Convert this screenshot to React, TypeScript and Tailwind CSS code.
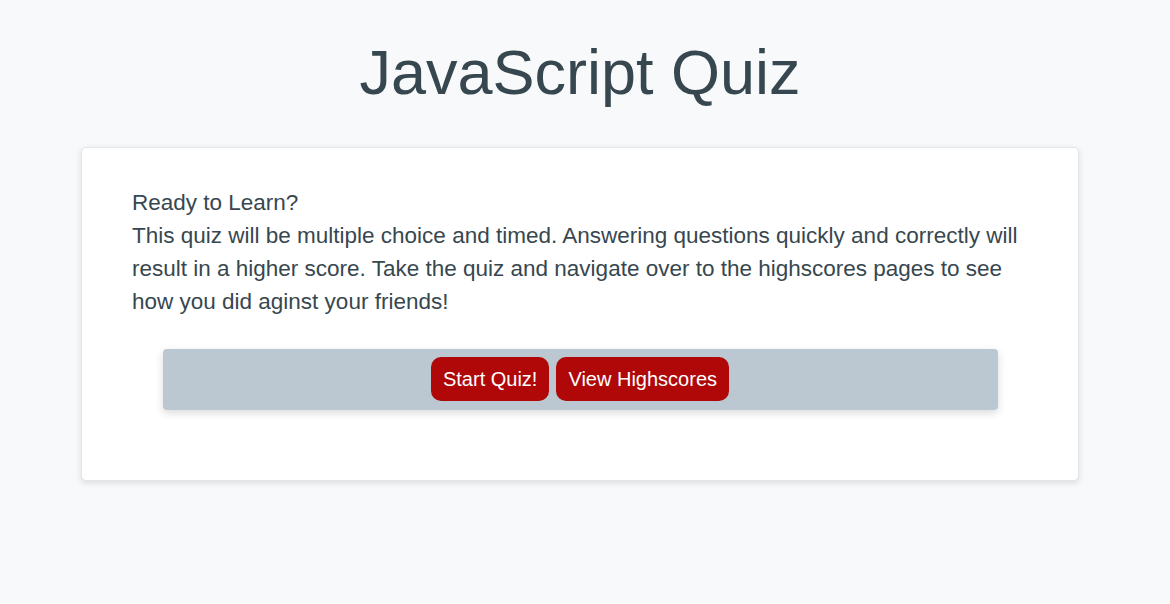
export default function App() {
  return (
    <div className="min-h-[604px] bg-[#f8f9fb] font-['Liberation_Sans',Arial,sans-serif] text-[#37474f]">
      <div className="w-[1160px] pt-[35px]">
        <h1 className="text-center text-[63px] leading-[74px]">JavaScript Quiz</h1>

        <div className="mx-auto mt-[38px] w-[998px] rounded-[5px] border border-[#e3e6ea] bg-white px-[50px] pt-[38px] pb-[70px] shadow-[0_2px_6px_rgba(0,0,0,0.12)]">
          <p className="text-[22.5px] leading-[33px]">
            Ready to Learn?
            <br />
            This quiz will be multiple choice and timed. Answering questions quickly and correctly will
            result in a higher score. Take the quiz and navigate over to the highscores pages to see
            how you did aginst your friends!
          </p>

          <div className="mx-auto mt-[31px] flex w-[835px] justify-center gap-[7px] rounded-[4px] bg-[#bcc8d1] pt-[8px] pb-[9px] shadow-[0_3px_8px_rgba(0,0,0,0.15)]">
            <button className="rounded-[10px] bg-[#b00808] px-[12px] py-[7px] text-[20px] leading-[30px] text-white">
              Start Quiz!
            </button>
            <button className="rounded-[10px] bg-[#b00808] px-[12px] py-[7px] text-[20px] leading-[30px] text-white">
              View Highscores
            </button>
          </div>
        </div>
      </div>
    </div>
  );
}
